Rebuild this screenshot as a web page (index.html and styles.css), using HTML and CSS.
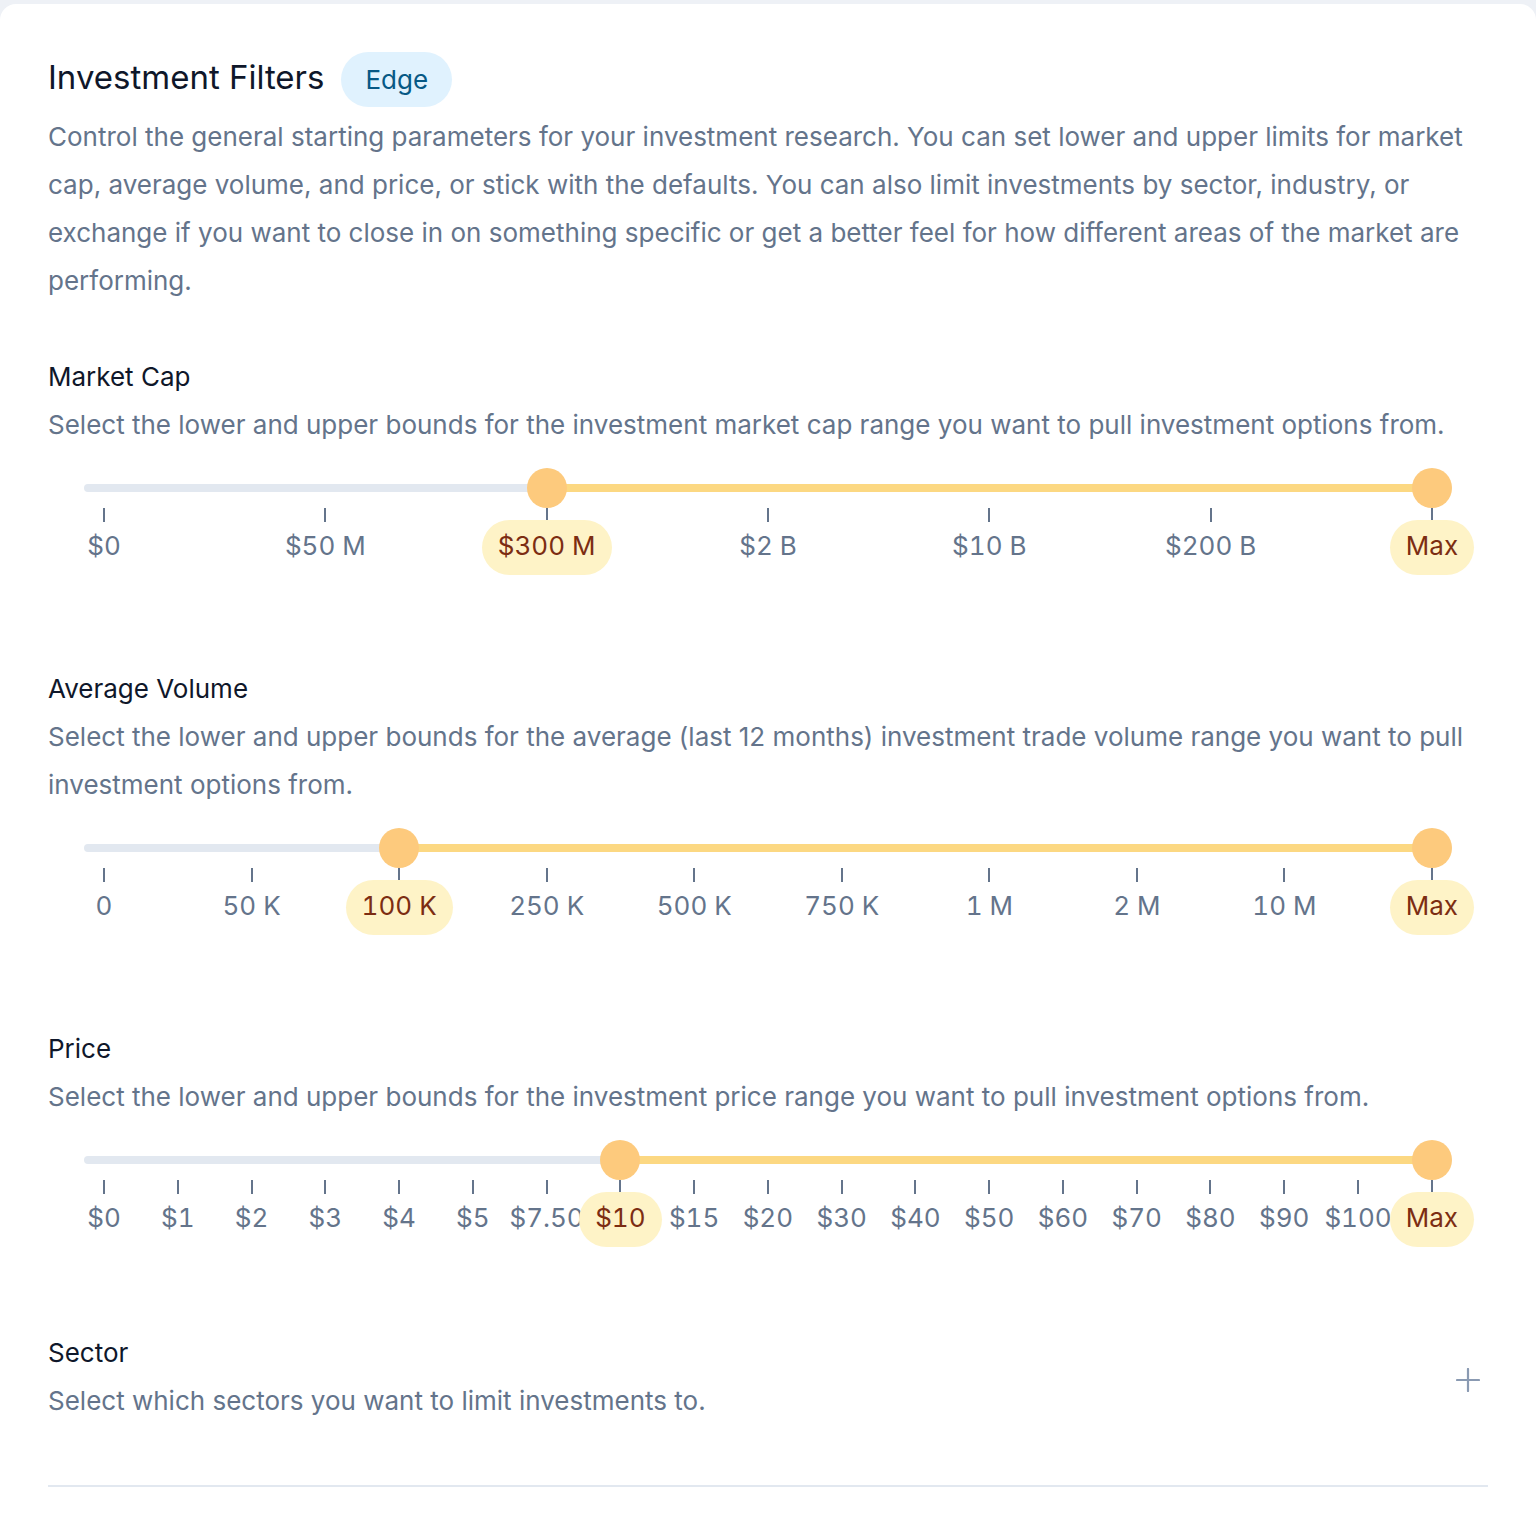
FILE: index.html
```html
<!DOCTYPE html>
<html lang="en">
<head>
  <meta charset="UTF-8" />
  <meta name="viewport" content="width=device-width, initial-scale=1.0"/>
  <title>Investment Filters</title>
  <link rel="stylesheet" href="styles.css">
</head>
<body>
  <div class="panel">
    <div class="head">
      <h1 class="title">Investment Filters</h1>
      <span class="badge">Edge</span>
    </div>
    <p class="intro">Control the general starting parameters for your investment research. You can set lower and upper limits for market cap, average volume, and price, or stick with the defaults. You can also limit investments by sector, industry, or exchange if you want to close in on something specific or get a better feel for how different areas of the market are performing.</p>

    <div class="filters">
      <!-- market cap: 7 stops, $300 M to Max -->
      <section class="filter">
        <h2 class="filter-name">Market Cap</h2>
        <p class="filter-note">Select the lower and upper bounds for the investment market cap range you want to pull investment options from.</p>
        <div class="range">
          <div class="rail">
            <div class="fill" style="left: 33.333%; right: 0%;"></div>
            <div class="thumb" style="left: 33.333%;"></div>
            <div class="thumb" style="left: 100%;"></div>
          </div>
          <div class="marks">
            <div class="mark"><span class="tick"></span><span class="value">$0</span></div>
            <div class="mark"><span class="tick"></span><span class="value">$50 M</span></div>
            <div class="mark"><span class="tick"></span><span class="value is-on">$300 M</span></div>
            <div class="mark"><span class="tick"></span><span class="value">$2 B</span></div>
            <div class="mark"><span class="tick"></span><span class="value">$10 B</span></div>
            <div class="mark"><span class="tick"></span><span class="value">$200 B</span></div>
            <div class="mark"><span class="tick"></span><span class="value is-on">Max</span></div>
          </div>
        </div>
      </section>

      <!-- average volume: 10 stops, 100 K to Max -->
      <section class="filter">
        <h2 class="filter-name">Average Volume</h2>
        <p class="filter-note">Select the lower and upper bounds for the average (last 12 months) investment trade volume range you want to pull investment options from.</p>
        <div class="range">
          <div class="rail">
            <div class="fill" style="left: 22.222%; right: 0%;"></div>
            <div class="thumb" style="left: 22.222%;"></div>
            <div class="thumb" style="left: 100%;"></div>
          </div>
          <div class="marks">
            <div class="mark"><span class="tick"></span><span class="value">0</span></div>
            <div class="mark"><span class="tick"></span><span class="value">50 K</span></div>
            <div class="mark"><span class="tick"></span><span class="value is-on">100 K</span></div>
            <div class="mark"><span class="tick"></span><span class="value">250 K</span></div>
            <div class="mark"><span class="tick"></span><span class="value">500 K</span></div>
            <div class="mark"><span class="tick"></span><span class="value">750 K</span></div>
            <div class="mark"><span class="tick"></span><span class="value">1 M</span></div>
            <div class="mark"><span class="tick"></span><span class="value">2 M</span></div>
            <div class="mark"><span class="tick"></span><span class="value">10 M</span></div>
            <div class="mark"><span class="tick"></span><span class="value is-on">Max</span></div>
          </div>
        </div>
      </section>

      <!-- price: 19 stops, $10 to Max -->
      <section class="filter">
        <h2 class="filter-name">Price</h2>
        <p class="filter-note">Select the lower and upper bounds for the investment price range you want to pull investment options from.</p>
        <div class="range">
          <div class="rail">
            <div class="fill" style="left: 38.889%; right: 0%;"></div>
            <div class="thumb" style="left: 38.889%;"></div>
            <div class="thumb" style="left: 100%;"></div>
          </div>
          <div class="marks">
            <div class="mark"><span class="tick"></span><span class="value">$0</span></div>
            <div class="mark"><span class="tick"></span><span class="value">$1</span></div>
            <div class="mark"><span class="tick"></span><span class="value">$2</span></div>
            <div class="mark"><span class="tick"></span><span class="value">$3</span></div>
            <div class="mark"><span class="tick"></span><span class="value">$4</span></div>
            <div class="mark"><span class="tick"></span><span class="value">$5</span></div>
            <div class="mark"><span class="tick"></span><span class="value">$7.50</span></div>
            <div class="mark"><span class="tick"></span><span class="value is-on">$10</span></div>
            <div class="mark"><span class="tick"></span><span class="value">$15</span></div>
            <div class="mark"><span class="tick"></span><span class="value">$20</span></div>
            <div class="mark"><span class="tick"></span><span class="value">$30</span></div>
            <div class="mark"><span class="tick"></span><span class="value">$40</span></div>
            <div class="mark"><span class="tick"></span><span class="value">$50</span></div>
            <div class="mark"><span class="tick"></span><span class="value">$60</span></div>
            <div class="mark"><span class="tick"></span><span class="value">$70</span></div>
            <div class="mark"><span class="tick"></span><span class="value">$80</span></div>
            <div class="mark"><span class="tick"></span><span class="value">$90</span></div>
            <div class="mark"><span class="tick"></span><span class="value">$100</span></div>
            <div class="mark"><span class="tick"></span><span class="value is-on">Max</span></div>
          </div>
        </div>
      </section>
    </div>

    <section class="sector">
      <div>
        <h2 class="filter-name">Sector</h2>
        <p class="filter-note">Select which sectors you want to limit investments to.</p>
      </div>
      <button class="add" type="button" aria-label="Add sector">
        <svg width="24" height="24" viewBox="0 0 24 24" fill="none" stroke="#8a9ab2" stroke-width="2.2" stroke-linecap="round">
          <path d="M12 1v22M1 12h22" />
        </svg>
      </button>
    </section>
  </div>
</body>
</html>
```

FILE: styles.css
```css
body {
  margin: 0;
  background: #eef1f6;
  font-family: Inter, "Noto Sans", sans-serif;
}
.panel {
  margin-top: 4px;
  background: #ffffff;
  border-radius: 16px 16px 0 0;
  padding: 48px 48px 50px;
}
.head {
  display: flex;
  align-items: baseline;
  gap: 17px;
  height: 55px;
}
.title {
  margin: 0;
  font-size: 33px;
  font-weight: 400;
  line-height: 40px;
  color: #0f172a;
}
.badge {
  padding: 12px 24px;
  line-height: 31px;
  font-size: 26px;
  border-radius: 28px;
  background: #e0f2fe;
  color: #075985;
}
.intro {
  margin: 6px 0 0;
  font-size: 26px;
  line-height: 48px;
  color: #64748b;
}
.filters {
  display: flex;
  flex-direction: column;
  gap: 90px;
  margin-top: 48px;
}
.filter-name {
  margin: 0;
  font-size: 26px;
  font-weight: 400;
  line-height: 48px;
  color: #0f172a;
}
.filter-note {
  margin: 0;
  font-size: 26px;
  line-height: 48px;
  color: #64748b;
}
.range {
  margin: 19px 36px 0;
  padding: 0 20px;
}
.rail {
  position: relative;
  height: 40px;
}
.rail::before {
  content: "";
  position: absolute;
  left: -20px;
  right: -20px;
  top: 16px;
  height: 8px;
  border-radius: 4px;
  background: #e2e8f0;
}
.fill {
  position: absolute;
  top: 16px;
  height: 8px;
  background: #fcd882;
}
.thumb {
  position: absolute;
  top: 0;
  width: 40px;
  height: 40px;
  border-radius: 50%;
  background: #fdca7d;
  transform: translateX(-50%);
}
.marks {
  display: flex;
  justify-content: space-between;
}
.mark {
  width: 0;
  display: flex;
  flex-direction: column;
  align-items: center;
}
.tick {
  flex: none;
  width: 2px;
  height: 14px;
  background: #64748b;
}
.value {
  margin-top: -2px;
  padding: 10px 16px 14px;
  font-size: 26px;
  line-height: 31px;
  font-variant-numeric: tabular-nums;
  white-space: nowrap;
  color: #64748b;
  border-radius: 28px;
}
.value.is-on {
  background: #fef3c7;
  color: #7c2d12;
}
.sector {
  margin-top: 82px;
  display: flex;
  align-items: center;
  justify-content: space-between;
  padding-bottom: 60px;
  border-bottom: 2px solid #e2e8f0;
}
.add {
  width: 40px;
  height: 40px;
  margin-top: 6px;
  padding: 0;
  border: none;
  background: none;
  display: flex;
  align-items: center;
  justify-content: center;
  cursor: pointer;
}
```
